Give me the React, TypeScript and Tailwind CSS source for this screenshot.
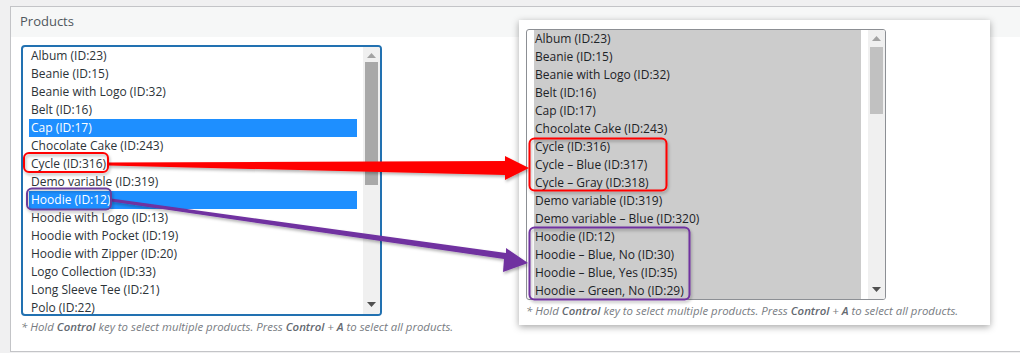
import React from 'react';

const leftItems = [
  'Album (ID:23)',
  'Beanie (ID:15)',
  'Beanie with Logo (ID:32)',
  'Belt (ID:16)',
  'Cap (ID:17)',
  'Chocolate Cake (ID:243)',
  'Cycle (ID:316)',
  'Demo variable (ID:319)',
  'Hoodie (ID:12)',
  'Hoodie with Logo (ID:13)',
  'Hoodie with Pocket (ID:19)',
  'Hoodie with Zipper (ID:20)',
  'Logo Collection (ID:33)',
  'Long Sleeve Tee (ID:21)',
  'Polo (ID:22)',
];

const rightItems = [
  'Album (ID:23)',
  'Beanie (ID:15)',
  'Beanie with Logo (ID:32)',
  'Belt (ID:16)',
  'Cap (ID:17)',
  'Chocolate Cake (ID:243)',
  'Cycle (ID:316)',
  'Cycle – Blue (ID:317)',
  'Cycle – Gray (ID:318)',
  'Demo variable (ID:319)',
  'Demo variable – Blue (ID:320)',
  'Hoodie (ID:12)',
  'Hoodie – Blue, No (ID:30)',
  'Hoodie – Blue, Yes (ID:35)',
  'Hoodie – Green, No (ID:29)',
];

const Hint: React.FC = () => (
  <p className="italic text-[11.4px] leading-[16px] text-[#787c82] whitespace-nowrap">
    * Hold <strong className="font-semibold text-[#646970]">Control</strong> key to select multiple products. Press{' '}
    <strong className="font-semibold text-[#646970]">Control</strong> + <strong className="font-semibold text-[#646970]">A</strong> to select all products.
  </p>
);

const ScrollTrack: React.FC<{ thumbTop: number; thumbHeight: number; thumbColor: string }> = ({ thumbTop, thumbHeight, thumbColor }) => (
  <div className="relative w-[17px] h-full bg-[#f0f0f0]">
    <svg className="absolute left-[4px] top-[6px]" width="9" height="5" viewBox="0 0 9 5">
      <path d="M0 5 L4.5 0 L9 5 Z" fill="#a3a3a3" />
    </svg>
    <div
      className="absolute left-[2px] w-[13px]"
      style={{ top: thumbTop, height: thumbHeight, backgroundColor: thumbColor }}
    />
    <svg className="absolute left-[4px] bottom-[7px]" width="9" height="5" viewBox="0 0 9 5">
      <path d="M0 0 L9 0 L4.5 5 Z" fill="#505050" />
    </svg>
  </div>
);

const App: React.FC = () => {
  const picked = ['Cap (ID:17)', 'Hoodie (ID:12)'];

  return (
    <div className="relative w-[1020px] h-[353px] overflow-hidden bg-[#f0f0f1] pt-[6px] pl-[10px] font-['Open_Sans',sans-serif] text-[12px]">
      <div className="h-[346px] border border-r-0 border-[#c3c4c7] bg-white">
        <div className="h-[30px] bg-[#f6f7f7] pl-[9px] flex items-center text-[13px] text-[#50575e]">Products</div>
        <div className="pl-[10px] pt-[8px]">
          <div className="flex w-[361px] h-[271px] border-2 border-[#2271b1] rounded-[4px] overflow-hidden bg-white">
            <div className="w-[340px] px-[6px] overflow-hidden">
              {leftItems.map(item => (
                <div
                  key={item}
                  className={
                    picked.includes(item)
                      ? 'h-[18px] leading-[18px] pl-[2px] bg-[#1e8fff] text-white whitespace-nowrap'
                      : 'h-[18px] leading-[18px] pl-[2px] text-[#2c3338] whitespace-nowrap'
                  }
                >
                  {item}
                </div>
              ))}
            </div>
            <ScrollTrack thumbTop={15} thumbHeight={123} thumbColor="#a8a8a8" />
          </div>
          <div className="mt-[3px]">
            <Hint />
          </div>
        </div>
      </div>

      {/* pasted popup shown over the panel */}
      <div className="absolute left-[519px] top-[20px] w-[471px] h-[305px] bg-white shadow-[0_2px_7px_rgba(0,0,0,0.35)] pl-[7px] pt-[9px]">
        <div className="flex w-[360px] h-[271px] border border-[#8c8f94] rounded-[3px] overflow-hidden bg-white">
          <div className="w-[341px] px-[7px] overflow-hidden">
            {rightItems.map(item => (
              <div key={item} className="h-[18px] leading-[18px] pl-[1px] bg-[#cccccc] text-[#1d2327] whitespace-nowrap">
                {item}
              </div>
            ))}
          </div>
          <ScrollTrack thumbTop={17} thumbHeight={67} thumbColor="#c1c1c1" />
        </div>
        <div className="mt-[3px]">
          <Hint />
        </div>
      </div>

      {/* annotation layer */}
      <svg className="absolute left-0 top-0 pointer-events-none" width="1020" height="353" viewBox="0 0 1020 353">
        <defs>
          <filter id="sh" x="-20%" y="-50%" width="140%" height="200%">
            <feDropShadow dx="1" dy="2" stdDeviation="1.5" floodColor="#000" floodOpacity="0.3" />
          </filter>
        </defs>
        <g filter="url(#sh)">
          <path d="M108 162.5 L505 161 L505 156 L529 168 L505 180 L505 175 L108 165.5 Z" fill="#ff0000" />
          <path d="M111 198.5 L506 253 L506 248 L528 263 L503 272 L504 259 L111 201.5 Z" fill="#7030a0" />
        </g>
        <g filter="url(#sh)" fill="none" strokeWidth="2">
          <rect x="24" y="153" width="84" height="19" rx="5" stroke="#ff0000" />
          <rect x="529.5" y="138.5" width="137" height="52" rx="5" stroke="#ff0000" />
          <rect x="27" y="188.5" width="84" height="21" rx="5" stroke="#6a3d9a" />
          <rect x="529.5" y="227.5" width="160" height="72" rx="5" stroke="#7030a0" />
        </g>
      </svg>
    </div>
  );
};

export default App;
